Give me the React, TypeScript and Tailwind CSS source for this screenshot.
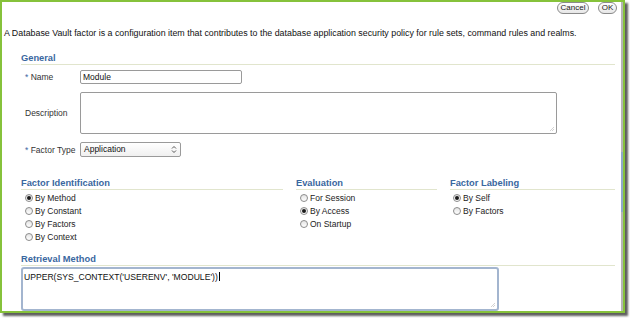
import React from 'react'

const font = { fontFamily: '"Liberation Sans", Arial, sans-serif' }

function Radio({ checked, label }: { checked?: boolean; label: string }) {
    return (
        <div className="flex h-[12.8px] items-center">
            <span className="flex h-[8px] w-[8px] items-center justify-center rounded-full border border-[#8c8c8c] bg-gradient-to-b from-[#e4e4e4] to-white">
                {checked && <span className="h-[4px] w-[4px] rounded-full bg-[#1a1a1a]" />}
            </span>
            <span className="ml-[2px] text-[8.5px] leading-[10px] text-[#222]">{label}</span>
        </div>
    )
}

function Heading({ children }: { children: React.ReactNode }) {
    return (
        <div className="border-b border-[#e1e5cd] text-[9.3px] font-bold leading-[11px] text-[#3a67a0]">{children}</div>
    )
}

function Grip() {
    return (
        <svg className="absolute bottom-[1px] right-[1px]" width="6" height="6" viewBox="0 0 6 6">
            <path d="M5 1 L1 5 M5 3 L3 5" stroke="#c8c8c8" strokeWidth="0.8" />
        </svg>
    )
}

export default function App() {
    return (
        <div className="h-[318px] w-[630px] bg-white" style={font}>
            <div className="flex h-[313px] w-[625px] overflow-hidden border-2 border-[#86c23b] bg-white shadow-[3px_3px_2px_rgba(40,40,40,0.75)]">
                <div className="flex-1">
                    <div className="flex justify-end gap-[9px] pr-[4px]">
                        <button className="h-[12px] w-[32px] rounded-full border border-[#8a8a8a] bg-gradient-to-b from-white to-[#e6e6e6] text-[8px] leading-[10px] text-[#222]">
                            Cancel
                        </button>
                        <button className="h-[12px] w-[19px] rounded-full border border-[#8a8a8a] bg-gradient-to-b from-white to-[#e6e6e6] text-[8px] leading-[10px] text-[#222]">
                            OK
                        </button>
                    </div>
                    <p className="mt-[14px] pl-[2px] text-[8.85px] leading-[10px] text-[#111]">
                        A Database Vault factor is a configuration item that contributes to the database application security policy for rule sets, command rules and realms.
                    </p>
                    <div className="mt-[15px] pl-[19px] pr-[6px]">
                        <Heading>General</Heading>
                        <div className="mt-[5px] flex items-center pl-[4px]">
                            <div className="w-[55px] text-[8.5px] leading-[10px] text-[#333]">
                                <span className="text-[#3a67a0]">*</span> Name
                            </div>
                            <div className="flex h-[14px] w-[162px] items-center rounded-[2px] border border-[#9a9a9a] px-[2px] text-[8.5px] text-[#111]">
                                Module
                            </div>
                        </div>
                        <div className="mt-[8px] flex items-center pl-[4px]">
                            <div className="w-[55px] text-[8.5px] leading-[10px] text-[#333]">Description</div>
                            <div className="relative h-[42px] w-[477px] rounded-[2px] border border-[#9a9a9a]">
                                <Grip />
                            </div>
                        </div>
                        <div className="mt-[8px] flex items-center pl-[4px]">
                            <div className="w-[55px] text-[8.5px] leading-[10px] text-[#333]">
                                <span className="text-[#3a67a0]">*</span> Factor Type
                            </div>
                            <div className="flex h-[15px] w-[101px] items-center justify-between rounded-[2px] border border-[#9a9a9a] bg-gradient-to-b from-white to-[#f0f0f0] pl-[3px] pr-[2px] text-[8.5px] text-[#111]">
                                <span>Application</span>
                                <svg width="8" height="9" viewBox="0 0 8 9">
                                    <path d="M2 3.5 L4 1.5 L6 3.5 M2 5.5 L4 7.5 L6 5.5" stroke="#444" strokeWidth="0.9" fill="none" />
                                </svg>
                            </div>
                        </div>
                        <div className="mt-[21px] flex gap-[13px]">
                            <div className="w-[262px]">
                                <Heading>Factor Identification</Heading>
                                <div className="mt-[2px] pl-[4px]">
                                    <Radio checked label="By Method" />
                                    <Radio label="By Constant" />
                                    <Radio label="By Factors" />
                                    <Radio label="By Context" />
                                </div>
                            </div>
                            <div className="w-[141px]">
                                <Heading>Evaluation</Heading>
                                <div className="mt-[2px] pl-[4px]">
                                    <Radio label="For Session" />
                                    <Radio checked label="By Access" />
                                    <Radio label="On Startup" />
                                </div>
                            </div>
                            <div className="flex-1">
                                <Heading>Factor Labeling</Heading>
                                <div className="mt-[2px] pl-[3px]">
                                    <Radio checked label="By Self" />
                                    <Radio label="By Factors" />
                                </div>
                            </div>
                        </div>
                        <div className="mt-[11px]">
                            <Heading>Retrieval Method</Heading>
                        </div>
                        <div className="relative mt-[1px] h-[44px] w-[478px] rounded-[3px] border-2 border-[#a3b5cf] px-[1px] pt-[2px] text-[8.6px] leading-[10px] text-[#111]">
                            UPPER(SYS_CONTEXT('USERENV', 'MODULE'))
                            <span className="ml-[1px] inline-block h-[9px] w-px translate-y-[1px] bg-black" />
                            <Grip />
                        </div>
                    </div>
                </div>
                <div className="w-[2px] bg-[#b4b4b4]">
                    <div className="mt-[150px] h-[60px] bg-[#8fa8c8]" />
                </div>
            </div>
        </div>
    )
}
